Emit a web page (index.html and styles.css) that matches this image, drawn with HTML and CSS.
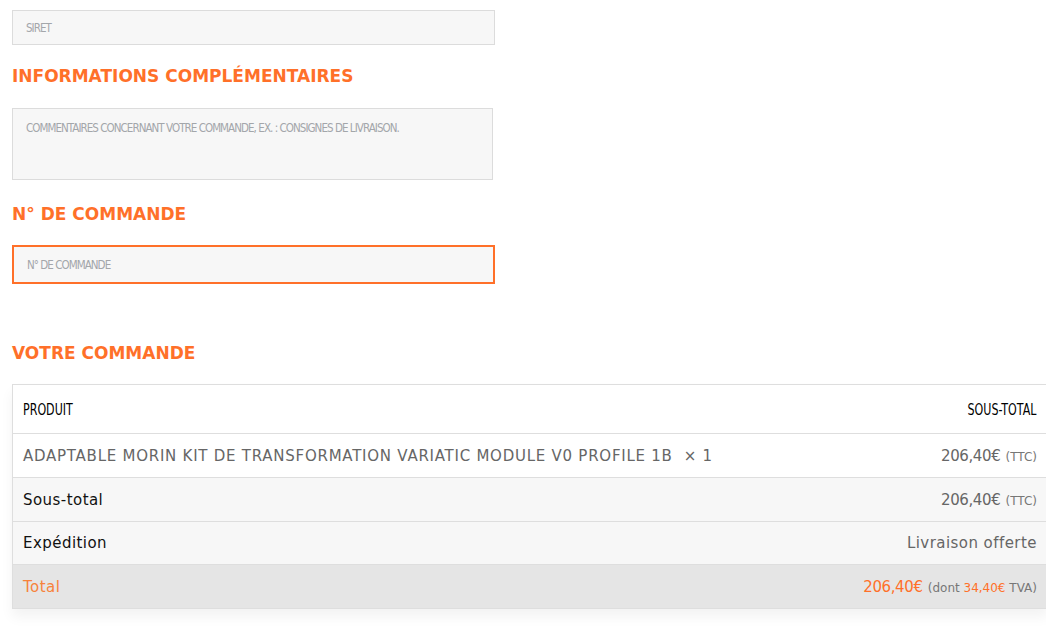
FILE: index.html
```html
<!DOCTYPE html>
<html lang="fr">

<head>
    <meta charset="UTF-8">
    <meta name="viewport" content="width=device-width, initial-scale=1.0">
    <title>Commande</title>
    <link rel="stylesheet" href="styles.css">
</head>

<body>

    <div class="checkout">
        <input class="field siret" type="text" placeholder="SIRET">

        <h3 class="section-title">Informations complémentaires</h3>
        <textarea class="field notes" placeholder="Commentaires concernant votre commande, ex. : consignes de livraison."></textarea>

        <h3 class="section-title">N° de commande</h3>
        <input class="field order-no focused" type="text" placeholder="N° de commande">

        <h3 class="section-title order-title">Votre commande</h3>
        <table class="order-table">
            <thead>
                <tr>
                    <th class="product-name"><span class="narrow">Produit</span></th>
                    <th class="product-total"><span class="narrow right">Sous-total</span></th>
                </tr>
            </thead>
            <tbody>
                <tr class="cart-item">
                    <td class="product-name">Adaptable Morin Kit de transformation Variatic module V0 Profile 1B&nbsp; <span class="qty">×&nbsp;1</span></td>
                    <td class="product-total"><span class="price">206,40€</span> <small>(TTC)</small></td>
                </tr>
            </tbody>
            <tfoot>
                <tr class="subtotal">
                    <th>Sous-total</th>
                    <td><span class="price">206,40€</span> <small>(TTC)</small></td>
                </tr>
                <tr class="shipping">
                    <th>Expédition</th>
                    <td>Livraison offerte</td>
                </tr>
                <tr class="order-total">
                    <th>Total</th>
                    <td><span class="price amount">206,40€</span> <small>(dont <span class="tax">34,40€</span> TVA)</small></td>
                </tr>
            </tfoot>
        </table>
    </div>

</body>

</html>
```

FILE: styles.css
```css
body {
    margin: 0;
    padding: 10px 0 0 12px;
    background: #fff;
    font-family: "DejaVu Sans", Arial, sans-serif;
    overflow: hidden;
}

.checkout {
    width: 1036px;
    padding-bottom: 30px;
}

.field {
    display: block;
    box-sizing: border-box;
    background: #f7f7f7;
    border: 1px solid #dcdcdc;
    border-radius: 0;
    padding: 0 13px;
    font-family: "DejaVu Sans Condensed", "Liberation Sans Narrow", sans-serif;
    font-size: 11.5px;
    letter-spacing: -0.95px;
    color: #333;
    outline: none;
}

.field::placeholder {
    color: #a3a6aa;
    text-transform: uppercase;
}

.siret {
    width: 483px;
    height: 35px;
}

.notes {
    width: 481px;
    height: 72px;
    padding-top: 12px;
    resize: none;
}

.order-no {
    width: 483px;
    height: 39px;
    padding-top: 1px;
}

.focused {
    border: 2px solid #ff7029;
}

.section-title {
    margin: 20px 0 21px;
    font-family: "DejaVu Sans", Arial, sans-serif;
    font-size: 17px;
    line-height: 22px;
    font-weight: bold;
    color: #ff7029;
    text-transform: uppercase;
}

.notes + .section-title {
    margin-top: 23px;
    margin-bottom: 20px;
}

.order-title {
    margin-top: 58px !important;
    margin-bottom: 20px;
}

.order-table {
    width: 100%;
    border-collapse: collapse;
    border-left: 1px solid #dedede;
    border-top: 1px solid #dedede;
    box-shadow: 0 8px 12px rgba(0, 0, 0, 0.05);
    font-size: 15px;
    letter-spacing: 0.45px;
}

.order-table th,
.order-table td {
    border-bottom: 1px solid #dedede;
    padding: 0 11px 0 10px;
    text-align: left;
    font-weight: normal;
    color: #111;
}

.order-table thead th {
    height: 48px;
    font-family: "DejaVu Sans Condensed", "Liberation Sans Narrow", sans-serif;
    font-size: 16px;
    letter-spacing: 0;
    text-transform: uppercase;
    color: #000;
}

.narrow {
    display: inline-block;
    transform: scaleX(0.77);
    transform-origin: left center;
}

.narrow.right {
    transform-origin: right center;
    margin-right: 1px;
}

.order-table .product-total,
.order-table td {
    text-align: right;
}

.cart-item td {
    height: 43px;
    color: #666;
}

.cart-item .product-name {
    text-align: left;
    text-transform: uppercase;
    letter-spacing: 0.75px;
}

.qty {
    text-transform: none;
}

.price {
    letter-spacing: -0.4px;
}

tfoot tr {
    background: #f7f7f7;
}

tfoot th,
tfoot td {
    height: 43px;
}

.shipping th,
.shipping td {
    height: 42px;
}

tfoot td {
    color: #666 !important;
}

small {
    font-size: 12px;
    letter-spacing: 0;
    color: #777;
}

.order-total {
    background: #e5e5e5;
}

.order-total th {
    color: #f7823b !important;
}

.order-total .amount {
    color: #ff7029;
}

.order-total .tax {
    color: #ff7029;
}
```
